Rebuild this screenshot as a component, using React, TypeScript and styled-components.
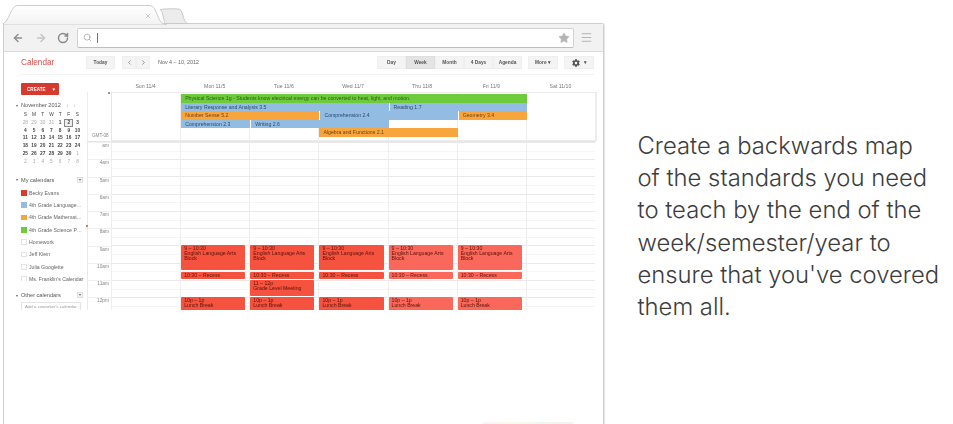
import React from 'react';
import styled, { createGlobalStyle } from 'styled-components';
import { ArrowLeft, ArrowRight, RotateCw, Search, Star, Menu, X, ChevronLeft, ChevronRight } from 'lucide-react';
import { FaCog } from 'react-icons/fa';

const GlobalStyle = createGlobalStyle`
  html, body { margin: 0; padding: 0; background: #fff; }
  * { box-sizing: border-box; }
`;

const Page = styled.div`
  display: flex;
  width: 953px;
  height: 424px;
  overflow: hidden;
  padding-left: 3px;
  background: #fff;
`;

const Shot = styled.div`
  width: 601px;
  flex: none;
  display: flex;
  flex-direction: column;
  filter: blur(0.45px);
`;

const TabStrip = styled.div`
  height: 24px;
  flex: none;
  margin-bottom: -1px;
  position: relative;
  z-index: 1;
`;

const CloseTab = styled.span`
  position: absolute;
  left: 141px;
  top: 12px;
  color: #999;
  display: flex;
`;

const Window = styled.div`
  flex: 1;
  display: flex;
  flex-direction: column;
  border: 1px solid #cfcfcf;
  border-bottom: 0;
  border-top-right-radius: 3px;
  box-shadow: 1px 0 1px #e4e4e4;
  background: #fff;
  min-height: 0;
`;

const Toolbar = styled.div`
  height: 28px;
  flex: none;
  display: flex;
  align-items: center;
  background: #f2f2f2;
  border-bottom: 1px solid #dcdcdc;
  padding: 0 8px 0 8px;
`;

const NavIcon = styled.span<{ $tone: string; $gap: number }>`
  display: flex;
  color: ${({ $tone }) => $tone};
  margin-right: ${({ $gap }) => $gap}px;
`;

const Omnibox = styled.div`
  width: 497px;
  height: 20px;
  background: #fff;
  border: 1px solid #d2d2d2;
  border-bottom-color: #bdbdbd;
  border-radius: 2px;
  display: flex;
  align-items: center;
  padding: 0 3px 0 5px;
  color: #9a9a9a;
`;

const Caret = styled.span`
  width: 1px;
  height: 10px;
  background: #777;
  margin-left: 5px;
`;

const StarSlot = styled.span`
  margin-left: auto;
  display: flex;
  color: #b5b5b5;
`;

const MenuSlot = styled.span`
  margin-left: 6px;
  display: flex;
  color: #a5a5a5;
`;

const TopBar = styled.div`
  height: 23px;
  flex: none;
  margin: 0 9px 0 17px;
  display: flex;
  align-items: flex-start;
  padding-top: 4px;
  border-bottom: 1px solid #f3f3f3;
  font-family: 'Liberation Sans', Arial, sans-serif;
`;

const Brand = styled.div`
  width: 65px;
  height: 14px;
  line-height: 14px;
  font-size: 8.2px;
  color: #dc5048;
`;

const Btn = styled.div<{ $w: number; $gap?: number; $lead?: number; $on?: boolean }>`
  width: ${({ $w }) => $w}px;
  height: 13px;
  margin-left: ${({ $lead }) => $lead ?? 0}px;
  margin-right: ${({ $gap }) => $gap ?? 0}px;
  display: flex;
  align-items: center;
  justify-content: center;
  gap: 4px;
  background: ${({ $on }) => ($on ? '#e4e4e4' : '#f4f4f4')};
  border: 1px solid ${({ $on }) => ($on ? '#dedede' : '#efefef')};
  font-size: 4.8px;
  font-weight: 700;
  color: #555;
`;

const RangeText = styled.div`
  height: 13px;
  line-height: 13px;
  font-size: 5.4px;
  color: #666;
  margin-left: 8px;
  margin-right: auto;
`;

const Body = styled.div`
  display: flex;
  height: 235px;
  flex: none;
  overflow: hidden;
  font-family: 'Liberation Sans', Arial, sans-serif;
`;

const Sidebar = styled.div`
  width: 83px;
  flex: none;
  padding: 8px 0 0 12px;
  overflow: hidden;
`;

const CreateButton = styled.div`
  width: 38px;
  height: 12px;
  background: #d6392d;
  border-radius: 1px;
  color: #fff;
  font-size: 4.6px;
  font-weight: 700;
  display: flex;
  align-items: center;
  justify-content: space-between;
  padding: 0 3px 0 6px;
  margin-left: 5px;
`;

const SectionHead = styled.div<{ $top: number }>`
  display: flex;
  align-items: center;
  margin-top: ${({ $top }) => $top}px;
  height: 8px;
  font-size: 5.6px;
  color: #555;
`;

const Twisty = styled.span`
  width: 5px;
  font-size: 4px;
  color: #666;
`;

const MonthNav = styled.span`
  margin-left: auto;
  margin-right: 10px;
  font-size: 4.5px;
  color: #aaa;
  letter-spacing: 2px;
`;

const AddBox = styled.span`
  margin-left: auto;
  margin-right: 4px;
  width: 6px;
  height: 6px;
  border: 1px solid #ddd;
  background: #f4f4f4;
  font-size: 4px;
  line-height: 4px;
  text-align: center;
  color: #666;
`;

const MiniMonth = styled.div`
  display: grid;
  grid-template-columns: repeat(7, 8.7px);
  grid-auto-rows: 7.8px;
  margin: 2px 0 0 5px;
`;

const MiniCell = styled.div<{ $tone: 'head' | 'in' | 'out'; $today?: boolean }>`
  font-size: 4.8px;
  line-height: 7.8px;
  text-align: center;
  color: ${({ $tone }) => ($tone === 'out' ? '#aaa' : '#444')};
  font-weight: ${({ $tone }) => ($tone === 'in' ? 700 : 400)};
  outline: ${({ $today }) => ($today ? '1px solid #888' : 'none')};
  outline-offset: -1px;
  background: ${({ $today }) => ($today ? '#eee' : 'transparent')};
`;

const CalList = styled.div`
  margin-top: 3px;
  margin-left: 5px;
  height: 94.5px;
  overflow: hidden;
`;

const CalRow = styled.div`
  display: flex;
  align-items: center;
  height: 12.35px;
  font-size: 5.2px;
  color: #666;
  white-space: nowrap;
`;

const Swatch = styled.span<{ $color?: string }>`
  width: 5.5px;
  height: 5.5px;
  margin-right: 2.5px;
  flex: none;
  background: ${({ $color }) => $color ?? '#fff'};
  border: ${({ $color }) => ($color ? '0' : '1px solid #e4e4e4')};
`;

const CoworkerInput = styled.div`
  width: 60px;
  height: 10px;
  margin: 3px 0 0 5px;
  border: 1px solid #e4e4e4;
  font-size: 4.4px;
  line-height: 8px;
  padding-left: 3px;
  color: #999;
  white-space: nowrap;
  overflow: hidden;
`;

const Main = styled.div`
  flex: 1;
  margin-right: 7px;
  min-width: 0;
  position: relative;
`;

const NowDot = styled.span`
  position: absolute;
  left: -1px;
  top: 150px;
  width: 2px;
  height: 2px;
  border-radius: 50%;
  background: #d9453c;
`;

const CornerDot = styled.span`
  position: absolute;
  left: 21px;
  top: 17px;
  width: 1.5px;
  height: 1.5px;
  background: #999;
`;

const DayHeads = styled.div`
  display: grid;
  grid-template-columns: 24px repeat(7, 69.15px);
  height: 17px;
  padding-top: 7px;
`;

const DayHead = styled.div`
  text-align: center;
  font-size: 5.2px;
  line-height: 8px;
  color: #777;
`;

const AllDayRow = styled.div`
  display: flex;
  height: 49px;
`;

const GmtCell = styled.div`
  width: 24px;
  flex: none;
  font-size: 4.6px;
  color: #888;
  padding: 41px 0 0 4px;
  border-left: 1px solid #eee;
`;

const AllDayGrid = styled.div`
  flex: 1;
  display: grid;
  grid-template-columns: repeat(7, 69.15px);
  grid-template-rows: repeat(5, 8.6px);
  row-gap: 0;
  padding-top: 1px;
  border: 1px solid #ececec;
  border-left-color: #e6e6e6;
  background: repeating-linear-gradient(to right, transparent 0 68.15px, #eeeeee 68.15px 69.15px);
`;

const Bar = styled.div<{ $bg: string; $ink: string; $from: number; $to: number; $row: number; $in?: boolean }>`
  grid-column: ${({ $from, $to }) => `${$from} / ${$to}`};
  grid-row: ${({ $row }) => $row};
  background: ${({ $bg }) => $bg};
  margin-left: ${({ $in }) => ($in ? 1 : 0)}px;
  font-size: 5.2px;
  line-height: 8.6px;
  padding-left: 4px;
  color: ${({ $ink }) => $ink};
  white-space: nowrap;
  overflow: hidden;
`;

const TimeRow = styled.div`
  display: flex;
  height: 169px;
  border-top: 1px solid #e6e6e6;
`;

const Gutter = styled.div`
  width: 24px;
  flex: none;
  border-left: 1px solid #eaeaea;
`;

const HourLabel = styled.div`
  height: 17.25px;
  font-size: 4.8px;
  line-height: 5px;
  text-align: right;
  padding-right: 2px;
  color: #888;
  border-top: 1px solid #f0f0f0;
`;

const DayCol = styled.div`
  width: 69.15px;
  flex: none;
  position: relative;
  border-left: 1px solid #eeeeee;
  background: repeating-linear-gradient(
    to bottom,
    #e9e9e9 0 1px,
    transparent 1px 8.6px,
    #f5f5f5 8.6px 9.6px,
    transparent 9.6px 17.25px
  );
`;

const Event = styled.div<{ $top: number; $h: number; $bg: string }>`
  position: absolute;
  left: 0;
  right: 4px;
  top: ${({ $top }) => $top}px;
  height: ${({ $h }) => $h}px;
  background: ${({ $bg }) => $bg};
  border-radius: 1px;
  padding: 1px 3px 0;
  font-size: 5.2px;
  line-height: 5px;
  color: #5a1208;
  overflow: hidden;
`;

const FootStrip = styled.div`
  margin: auto 0 0 479px;
  width: 90px;
  height: 2px;
  flex: none;
  background: linear-gradient(to right, #f8f3f3, #fbf9ee, #f2f6f0, #f8f1f2);
`;

const Caption = styled.p`
  margin: 130px 0 0 33.5px;
  width: 312px;
  font-family: 'Inter', 'Liberation Sans', sans-serif;
  font-size: 23.8px;
  font-weight: 300;
  line-height: 32.2px;
  color: #3d3d3d;
  white-space: pre-line;
`;

const GREEN = '#6dcb3c';
const BLUE = '#93bce2';
const ORANGE = '#f8a53e';
const INK_GREEN = '#2f5a16';
const INK_BLUE = '#2c4a68';
const INK_ORANGE = '#6e4310';

const views = [
  { label: 'Day', on: false },
  { label: 'Week', on: true },
  { label: 'Month', on: false },
  { label: '4 Days', on: false },
  { label: 'Agenda', on: false },
];

const dayNames = ['Sun 11/4', 'Mon 11/5', 'Tue 11/6', 'Wed 11/7', 'Thu 11/8', 'Fri 11/9', 'Sat 11/10'];

const allDay = [
  { text: 'Physical Science 1g - Students know electrical energy can be converted to heat, light, and motion.', bg: GREEN, ink: INK_GREEN, from: 2, to: 7, row: 1 },
  { text: 'Literary Response and Analysis 3.5', bg: BLUE, ink: INK_BLUE, from: 2, to: 5, row: 2 },
  { text: 'Reading 1.7', bg: BLUE, ink: INK_BLUE, from: 5, to: 7, row: 2, inset: true },
  { text: 'Number Sense 5.2', bg: ORANGE, ink: INK_ORANGE, from: 2, to: 4, row: 3 },
  { text: 'Comprehension 2.4', bg: BLUE, ink: INK_BLUE, from: 4, to: 6, row: 3, inset: true },
  { text: 'Geometry 3.4', bg: ORANGE, ink: INK_ORANGE, from: 6, to: 7, row: 3, inset: true },
  { text: 'Comprehension 2.3', bg: BLUE, ink: INK_BLUE, from: 2, to: 3, row: 4 },
  { text: 'Writing 2.6', bg: BLUE, ink: INK_BLUE, from: 3, to: 5, row: 4, inset: true },
  { text: 'Algebra and Functions 2.1', bg: ORANGE, ink: INK_ORANGE, from: 4, to: 6, row: 5 },
];

const miniHead = ['S', 'M', 'T', 'W', 'T', 'F', 'S'];
const miniDays = [
  '28', '29', '30', '31', '1', '2', '3',
  '4', '5', '6', '7', '8', '9', '10',
  '11', '12', '13', '14', '15', '16', '17',
  '18', '19', '20', '21', '22', '23', '24',
  '25', '26', '27', '28', '29', '30', '1',
  '2', '3', '4', '5', '6', '7', '8',
];

const myCalendars = [
  { name: 'Becky Evans', color: '#dd3a2c' },
  { name: '4th Grade Language…', color: BLUE },
  { name: '4th Grade Mathemat…', color: ORANGE },
  { name: '4th Grade Science P…', color: GREEN },
  { name: 'Homework' },
  { name: 'Jeff Klein' },
  { name: 'Julia Googlette' },
  { name: "Ms. Franklin's Calendar" },
];

const hours = ['am', '4am', '5am', '6am', '7am', '8am', '9am', '10am', '11am', '12pm'];

const App: React.FC = () => {
  return (
    <Page>
      <GlobalStyle />
      <Shot>
        <TabStrip>
          <svg width="190" height="25" viewBox="0 0 190 25" style={{ display: 'block' }}>
            <defs>
              <linearGradient id="tabFill" x1="0" y1="0" x2="0" y2="1">
                <stop offset="0" stopColor="#ffffff" />
                <stop offset="1" stopColor="#f2f2f2" />
              </linearGradient>
            </defs>
            <path
              d="M162 23.5 C160 18 160 11 157 9.5 C165 8.5 175 8.5 177 9.5 C180 11 180 21 184 23.5 Z"
              fill="#ececec"
              stroke="#c9c9c9"
            />
            <path
              d="M0.5 25 L0.5 23 C6 22 7 7 14 5.5 L147 5.5 C154 6 154 22 161 24 L164 25 Z"
              fill="url(#tabFill)"
              stroke="#cccccc"
            />
          </svg>
          <CloseTab>
            <X size={8} strokeWidth={1.5} />
          </CloseTab>
        </TabStrip>
        <Window>
          <Toolbar>
            <NavIcon $tone="#8f8f8f" $gap={11}>
              <ArrowLeft size={12} strokeWidth={3} />
            </NavIcon>
            <NavIcon $tone="#c4c4c4" $gap={10}>
              <ArrowRight size={12} strokeWidth={3} />
            </NavIcon>
            <NavIcon $tone="#8a8a8a" $gap={8}>
              <RotateCw size={12} strokeWidth={3} />
            </NavIcon>
            <Omnibox>
              <Search size={9} strokeWidth={1.8} />
              <Caret />
              <StarSlot>
                <Star size={12} fill="currentColor" strokeWidth={1} />
              </StarSlot>
            </Omnibox>
            <MenuSlot>
              <Menu size={13} strokeWidth={1.5} />
            </MenuSlot>
          </Toolbar>
          <TopBar>
            <Brand>Calendar</Brand>
            <Btn $w={29} $gap={7}>Today</Btn>
            <Btn $w={14}>
              <ChevronLeft size={7} strokeWidth={2} />
            </Btn>
            <Btn $w={14}>
              <ChevronRight size={7} strokeWidth={2} />
            </Btn>
            <RangeText>Nov 4 – 10, 2012</RangeText>
            {views.map((view) => (
              <Btn key={view.label} $w={29} $on={view.on}>
                {view.label}
              </Btn>
            ))}
            <Btn $w={30} $gap={6} $lead={6}>
              More ▾
            </Btn>
            <Btn $w={30}>
              <FaCog size={8} color="#555" />
              ▾
            </Btn>
          </TopBar>
          <Body>
            <Sidebar>
              <CreateButton>
                CREATE <span>▼</span>
              </CreateButton>
              <SectionHead $top={6}>
                <Twisty>▾</Twisty>November 2012<MonthNav>‹ ›</MonthNav>
              </SectionHead>
              <MiniMonth>
                {miniHead.map((d, i) => (
                  <MiniCell key={i} $tone="head">{d}</MiniCell>
                ))}
                {miniDays.map((d, i) => (
                  <MiniCell
                    key={i}
                    $tone={i < 4 || i > 33 ? 'out' : 'in'}
                    $today={i === 5}
                  >
                    {d}
                  </MiniCell>
                ))}
              </MiniMonth>
              <SectionHead $top={10}>
                <Twisty>▾</Twisty>My calendars<AddBox>▾</AddBox>
              </SectionHead>
              <CalList>
                {myCalendars.map((cal) => (
                  <CalRow key={cal.name}>
                    <Swatch $color={cal.color} />
                    {cal.name}
                  </CalRow>
                ))}
              </CalList>
              <SectionHead $top={10}>
                <Twisty>▾</Twisty>Other calendars<AddBox>▾</AddBox>
              </SectionHead>
              <CoworkerInput>Add a coworker's calendar</CoworkerInput>
            </Sidebar>
            <Main>
              <NowDot />
              <CornerDot />
              <DayHeads>
                <div />
                {dayNames.map((d) => (
                  <DayHead key={d}>{d}</DayHead>
                ))}
              </DayHeads>
              <AllDayRow>
                <GmtCell>GMT-08</GmtCell>
                <AllDayGrid>
                  {allDay.map((e) => (
                    <Bar key={e.text} $bg={e.bg} $ink={e.ink} $from={e.from} $to={e.to} $row={e.row} $in={e.inset}>
                      {e.text}
                    </Bar>
                  ))}
                </AllDayGrid>
              </AllDayRow>
              <TimeRow>
                <Gutter>
                  {hours.map((h) => (
                    <HourLabel key={h}>{h}</HourLabel>
                  ))}
                </Gutter>
                {dayNames.map((d, i) => {
                  const bg = i >= 4 ? '#f9685a' : '#f5533f';
                  const school = i >= 1 && i <= 5;
                  return (
                    <DayCol key={d}>
                      {school && (
                        <>
                          <Event $top={103} $h={25} $bg={bg}>
                            9 – 10:30
                            <br />
                            English Language Arts Block
                          </Event>
                          <Event $top={129.5} $h={7.5} $bg={bg}>10:30 – Recess</Event>
                          <Event $top={155} $h={14} $bg={bg}>
                            10p – 1p
                            <br />
                            Lunch Break
                          </Event>
                        </>
                      )}
                      {i === 2 && (
                        <Event $top={138} $h={16} $bg={bg}>
                          11 – 12p
                          <br />
                          Grade Level Meeting
                        </Event>
                      )}
                    </DayCol>
                  );
                })}
              </TimeRow>
            </Main>
          </Body>
          <FootStrip />
        </Window>
      </Shot>
      <Caption>
        {"Create a backwards map\nof the standards you need\nto teach by the end of the\nweek/semester/year to\nensure that you've covered\nthem all."}
      </Caption>
    </Page>
  );
};

export default App;
